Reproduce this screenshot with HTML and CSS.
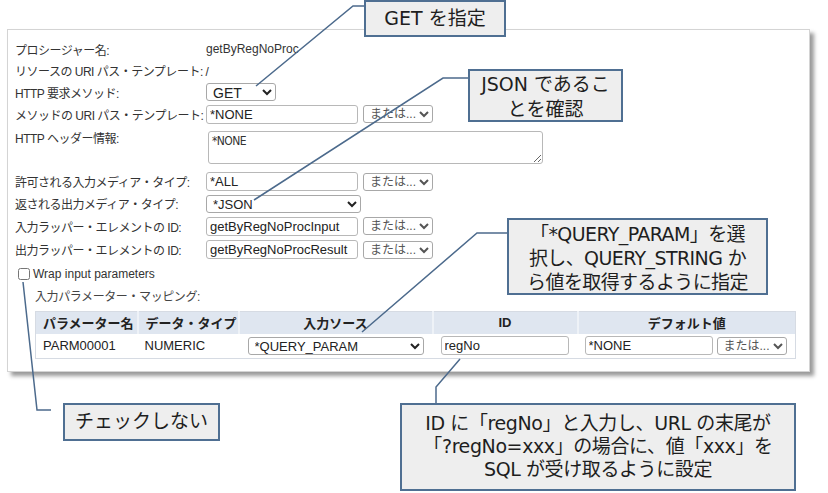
FILE: index.html
```html
<!DOCTYPE html>
<html lang="ja">
<head>
    <meta charset="UTF-8">
    <meta name="viewport" content="width=device-width, initial-scale=1.0">
    <title>REST API 設定</title>
    <link rel="stylesheet" href="styles.css">
</head>
<body>
    <div class="canvas">
        <div class="panel">
            <div class="form">
                <div class="label">プロシージャー名:</div>
                <div class="value">getByRegNoProc</div>

                <div class="label">リソースの URI パス・テンプレート: /</div>
                <div class="value"></div>

                <div class="label">HTTP 要求メソッド:</div>
                <div class="value">
                    <select class="sel sel-method"><option>GET</option></select>
                </div>

                <div class="label">メソッドの URI パス・テンプレート:</div>
                <div class="value">
                    <input class="txt" type="text" value="*NONE">
                    <select class="sel sel-or"><option>または...</option></select>
                </div>

                <div class="label label-top">HTTP ヘッダー情報:</div>
                <div class="value value-top">
                    <textarea class="area">*NONE</textarea>
                </div>

                <div class="label">許可される入力メディア・タイプ:</div>
                <div class="value">
                    <input class="txt" type="text" value="*ALL">
                    <select class="sel sel-or"><option>または...</option></select>
                </div>

                <div class="label">返される出力メディア・タイプ:</div>
                <div class="value">
                    <select class="sel sel-media"><option>*JSON</option></select>
                </div>

                <div class="label">入力ラッパー・エレメントの ID:</div>
                <div class="value">
                    <input class="txt" type="text" value="getByRegNoProcInput">
                    <select class="sel sel-or"><option>または...</option></select>
                </div>

                <div class="label">出力ラッパー・エレメントの ID:</div>
                <div class="value">
                    <input class="txt" type="text" value="getByRegNoProcResult">
                    <select class="sel sel-or"><option>または...</option></select>
                </div>
            </div>

            <label class="wrap-row">
                <input class="check" type="checkbox">
                <span>Wrap input parameters</span>
            </label>

            <div class="mapping-title">入力パラメーター・マッピング:</div>

            <table class="mapping">
                <thead>
                    <tr>
                        <th class="col-name">パラメーター名</th>
                        <th class="col-type">データ・タイプ</th>
                        <th class="col-source center">入力ソース</th>
                        <th class="col-id center">ID</th>
                        <th class="col-default center">デフォルト値</th>
                    </tr>
                </thead>
                <tbody>
                    <tr>
                        <td>PARM00001</td>
                        <td>NUMERIC</td>
                        <td class="cell-source"><select class="sel sel-source"><option>*QUERY_PARAM</option></select></td>
                        <td class="cell-id"><input class="txt txt-id" type="text" value="regNo"></td>
                        <td>
                            <div class="cell-pair">
                                <input class="txt txt-default" type="text" value="*NONE">
                                <select class="sel sel-or"><option>または...</option></select>
                            </div>
                        </td>
                    </tr>
                </tbody>
            </table>
        </div>

        <!-- callout lines -->
        <svg class="leaders" width="828" height="493" viewBox="0 0 828 493">
            <polyline points="364,6 353,6 256,86"></polyline>
            <polyline points="468,78 443,78 254,200"></polyline>
            <polyline points="507,233 477,233 362,332"></polyline>
            <polyline points="460,359 436,387 436,403"></polyline>
            <polyline points="23,282 37,410 51,410"></polyline>
        </svg>

        <div class="callout callout-get">GET を指定</div>
        <div class="callout callout-json">JSON であるこ<br>とを確認</div>
        <div class="callout callout-query">「*QUERY_PARAM」を選<br>択し、QUERY_STRING か<br>ら値を取得するように指定</div>
        <div class="callout callout-check">チェックしない</div>
        <div class="callout callout-id">ID に「regNo」と入力し、URL の末尾が<br>「?regNo=xxx」の場合に、値「xxx」を<br>SQL が受け取るように設定</div>
    </div>
</body>
</html>
```

FILE: styles.css
```css
body {
    margin: 0;
    background: #fff;
    font-family: "Liberation Sans", "Noto Sans CJK JP", sans-serif;
    color: #333;
}

.canvas {
    position: relative;
    width: 828px;
    height: 493px;
    overflow: hidden;
}

.panel {
    box-sizing: border-box;
    margin: 29px 0 0 7px;
    width: 803px;
    height: 343px;
    padding: 8px 14px 0 7px;
    background: #fff;
    border: 1px solid #d4d4d4;
    box-shadow: 4px 4px 4px #9a9a9a;
}

.form {
    display: grid;
    grid-template-columns: 191px 1fr;
    grid-template-rows: 22px 21px 22px 22px 45px 23px 21px 24px 23px;
}

.label {
    font-size: 12px;
    letter-spacing: -0.5px;
    color: #333;
    display: flex;
    align-items: center;
    white-space: nowrap;
}

.value {
    font-size: 12px;
    color: #333;
    display: flex;
    align-items: center;
    gap: 5px;
}

.label-top {
    align-items: flex-start;
    padding-top: 4px;
}

.value-top {
    align-items: flex-start;
    padding-top: 6px;
}

.txt {
    box-sizing: border-box;
    width: 152px;
    height: 19px;
    margin: 0;
    padding: 0 3px;
    font-family: "Liberation Sans", sans-serif;
    font-size: 13px;
    color: #222;
    border: 1px solid #b8b8b8;
    border-radius: 3px;
    background: #fff;
}

.sel {
    box-sizing: border-box;
    height: 18px;
    margin: 0;
    padding: 0 0 0 2px;
    font-family: "Liberation Sans", "Noto Sans CJK JP", sans-serif;
    font-size: 13px;
    color: #222;
    border: 1px solid #a8a8a8;
    border-radius: 3px;
    background: #fff;
}

.sel-or {
    width: 70px;
    font-size: 12px;
    color: #555;
}

.sel-method {
    width: 70px;
    font-size: 14px;
}

.sel-media {
    width: 155px;
    font-size: 13px;
}

.area {
    box-sizing: border-box;
    width: 335px;
    height: 33px;
    margin: 0 0 0 2px;
    padding: 2px 3px;
    font-family: "DejaVu Sans Condensed", "DejaVu Sans", sans-serif;
    font-size: 12px;
    letter-spacing: -0.6px;
    color: #333;
    border: 1px solid #b8b8b8;
    border-radius: 3px;
    resize: both;
}

.wrap-row {
    display: flex;
    align-items: center;
    height: 26px;
    margin-left: 3px;
    font-size: 12px;
    color: #333;
}

.check {
    width: 12px;
    height: 12px;
    margin: 0 3px 0 0;
}

.mapping-title {
    height: 21px;
    line-height: 21px;
    margin-left: 20px;
    font-size: 12px;
    letter-spacing: -0.4px;
    color: #444;
}

.mapping {
    margin: 3px 0 0 20px;
    width: 761px;
    border-collapse: collapse;
    border: 1px solid #d6dbe3;
    font-size: 13px;
    table-layout: fixed;
}

.mapping th,
.mapping td {
    box-sizing: border-box;
}

.mapping th {
    height: 22px;
    padding: 0 7px;
    background: #dfe6f0;
    border-left: 2px solid #eef2f7;
    font-weight: bold;
    font-size: 13px;
    color: #222;
    text-align: left;
    white-space: nowrap;
}

.mapping th:first-child {
    border-left: none;
}

.mapping th.center {
    text-align: center;
}

.mapping td {
    height: 25px;
    padding: 0 7px;
    color: #222;
    white-space: nowrap;
}

.mapping td.cell-source {
    padding-left: 9px;
}

.mapping td.cell-id {
    padding-left: 8px;
}

.cell-pair {
    display: flex;
    align-items: center;
    gap: 4px;
}

.col-name { width: 102px; }
.col-type { width: 101px; }
.col-source { width: 194px; }
.col-id { width: 145px; }

.sel-source {
    width: 176px;
    font-size: 13px;
}

.txt-id {
    width: 128px;
}

.txt-default {
    width: 128px;
}

.leaders {
    position: absolute;
    left: 0;
    top: 0;
    pointer-events: none;
}

.leaders polyline {
    fill: none;
    stroke: #4c6a8c;
    stroke-width: 1.5;
}

/* DejaVu first: Verdana-like latin, tight line box */
.callout {
    position: absolute;
    box-sizing: border-box;
    background: #eeeeee;
    border: 2px solid #4f6f92;
    font-family: "DejaVu Sans", "Noto Sans CJK JP", sans-serif;
    font-size: 19px;
    line-height: 23px;
    color: #1e1e1e;
    text-align: center;
    white-space: nowrap;
}

.callout-get {
    left: 364px;
    top: 0;
    width: 142px;
    height: 37px;
    padding-top: 5px;
}

.callout-json {
    left: 468px;
    top: 69px;
    width: 155px;
    height: 53px;
    padding-top: 1px;
    line-height: 25px;
}

.callout-query {
    left: 507px;
    top: 218px;
    width: 261px;
    height: 77px;
    padding-top: 2px;
    line-height: 24px;
    letter-spacing: -0.6px;
}

.callout-check {
    left: 63px;
    top: 403px;
    width: 157px;
    height: 38px;
    padding-top: 5px;
}

.callout-id {
    left: 400px;
    top: 403px;
    width: 396px;
    height: 88px;
    padding-top: 7px;
    letter-spacing: -0.4px;
}
```
